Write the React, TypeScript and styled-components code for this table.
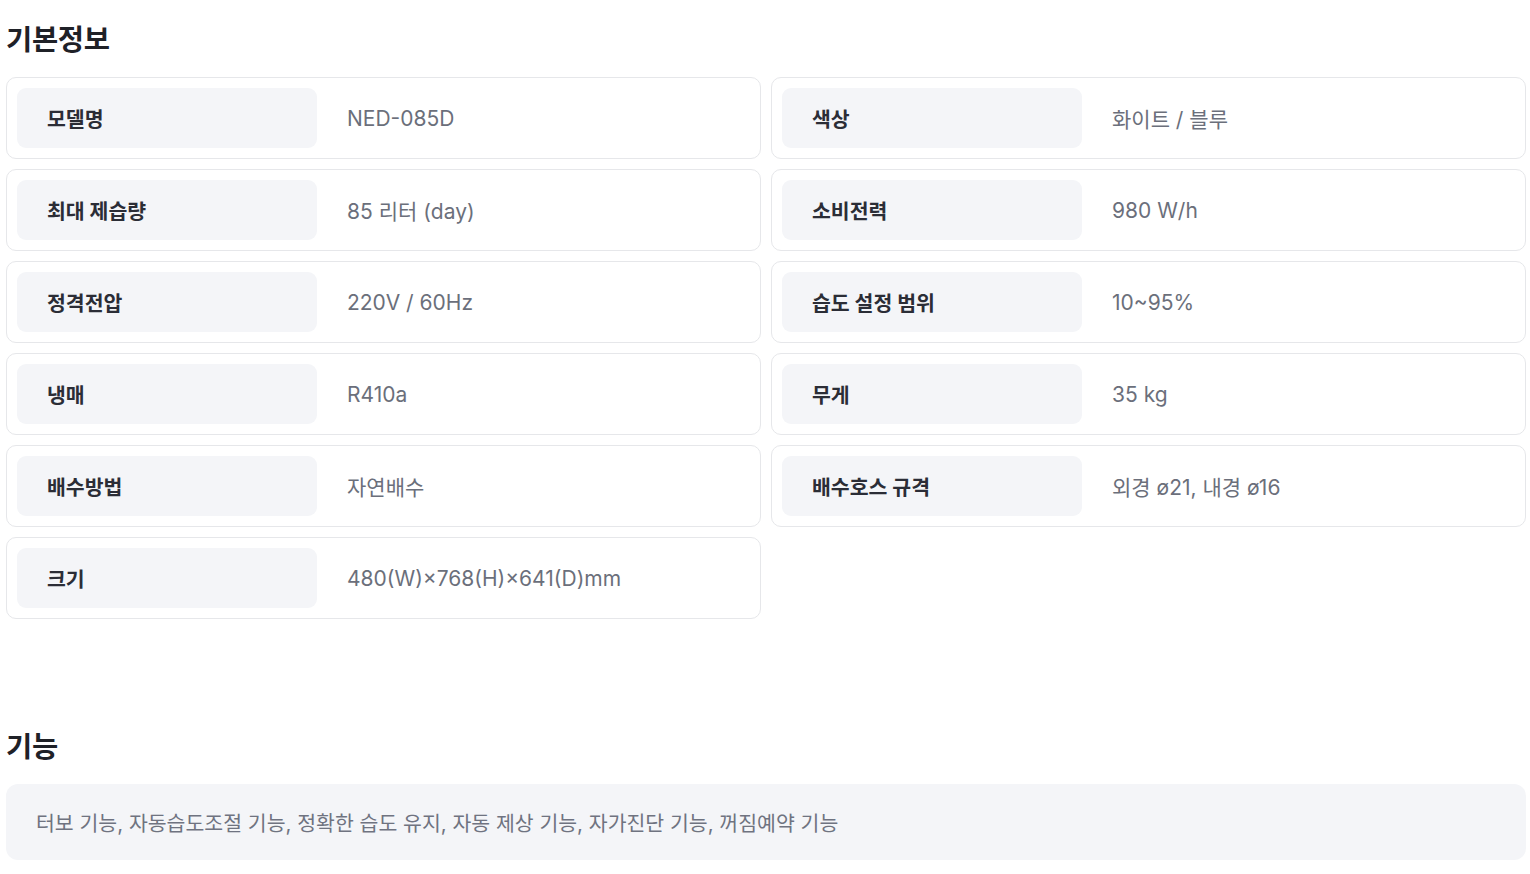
import React from "react";
import styled, { createGlobalStyle } from "styled-components";

const Global = createGlobalStyle`
  html, body { margin: 0; padding: 0; background: #ffffff; }
  body { font-family: Inter, "Noto Sans CJK KR", "Noto Sans", sans-serif; }
`;

const Page = styled.div`
  width: 1520px;
  padding: 0 4px 0 6px;
`;

const Section = styled.section<{ $top: number }>`
  padding-top: ${(p) => p.$top}px;
`;

const Title = styled.h2`
  margin: 0;
  font-size: 28.5px;
  font-weight: 700;
  color: #1f2127;
  line-height: 36px;
  letter-spacing: -0.3px;
`;

const Grid = styled.div`
  margin-top: 19px;
  display: grid;
  grid-template-columns: 1fr 1fr;
  column-gap: 10px;
  row-gap: 10px;
`;

const Card = styled.div`
  display: flex;
  align-items: center;
  height: 82px;
  box-sizing: border-box;
  padding: 10px;
  border: 1px solid #e6e7ea;
  border-radius: 10px;
  background: #fff;
`;

const Label = styled.div`
  flex: 0 0 300px;
  height: 60px;
  box-sizing: border-box;
  display: flex;
  align-items: center;
  padding-left: 30px;
  background: #f4f5f8;
  border-radius: 9px;
  font-size: 20.5px;
  font-weight: 700;
  color: #2b2d36;
`;

const Value = styled.div`
  padding-left: 30px;
  font-size: 21px;
  color: #6b6f7b;
`;

const Features = styled.div`
  margin-top: 19px;
  height: 76px;
  box-sizing: border-box;
  display: flex;
  align-items: center;
  padding-left: 30px;
  background: #f4f5f8;
  border-radius: 12px;
  font-size: 20.5px;
  color: #6f7380;
`;

const specs: [string, string][] = [
  ["모델명", "NED-085D"],
  ["색상", "화이트 / 블루"],
  ["최대 제습량", "85 리터 (day)"],
  ["소비전력", "980 W/h"],
  ["정격전압", "220V / 60Hz"],
  ["습도 설정 범위", "10~95%"],
  ["냉매", "R410a"],
  ["무게", "35 kg"],
  ["배수방법", "자연배수"],
  ["배수호스 규격", "외경 ø21, 내경 ø16"],
  ["크기", "480(W)×768(H)×641(D)mm"],
];

export default function App() {
  return (
    <>
      <Global />
      <Page>
        <Section $top={22}>
          <Title>기본정보</Title>
          <Grid>
            {specs.map(([k, v]) => (
              <Card key={k}>
                <Label>{k}</Label>
                <Value>{v}</Value>
              </Card>
            ))}
          </Grid>
        </Section>
        <Section $top={110}>
          <Title>기능</Title>
          <Features>
            터보 기능, 자동습도조절 기능, 정확한 습도 유지, 자동 제상 기능, 자가진단 기능, 꺼짐예약 기능
          </Features>
        </Section>
      </Page>
    </>
  );
}
